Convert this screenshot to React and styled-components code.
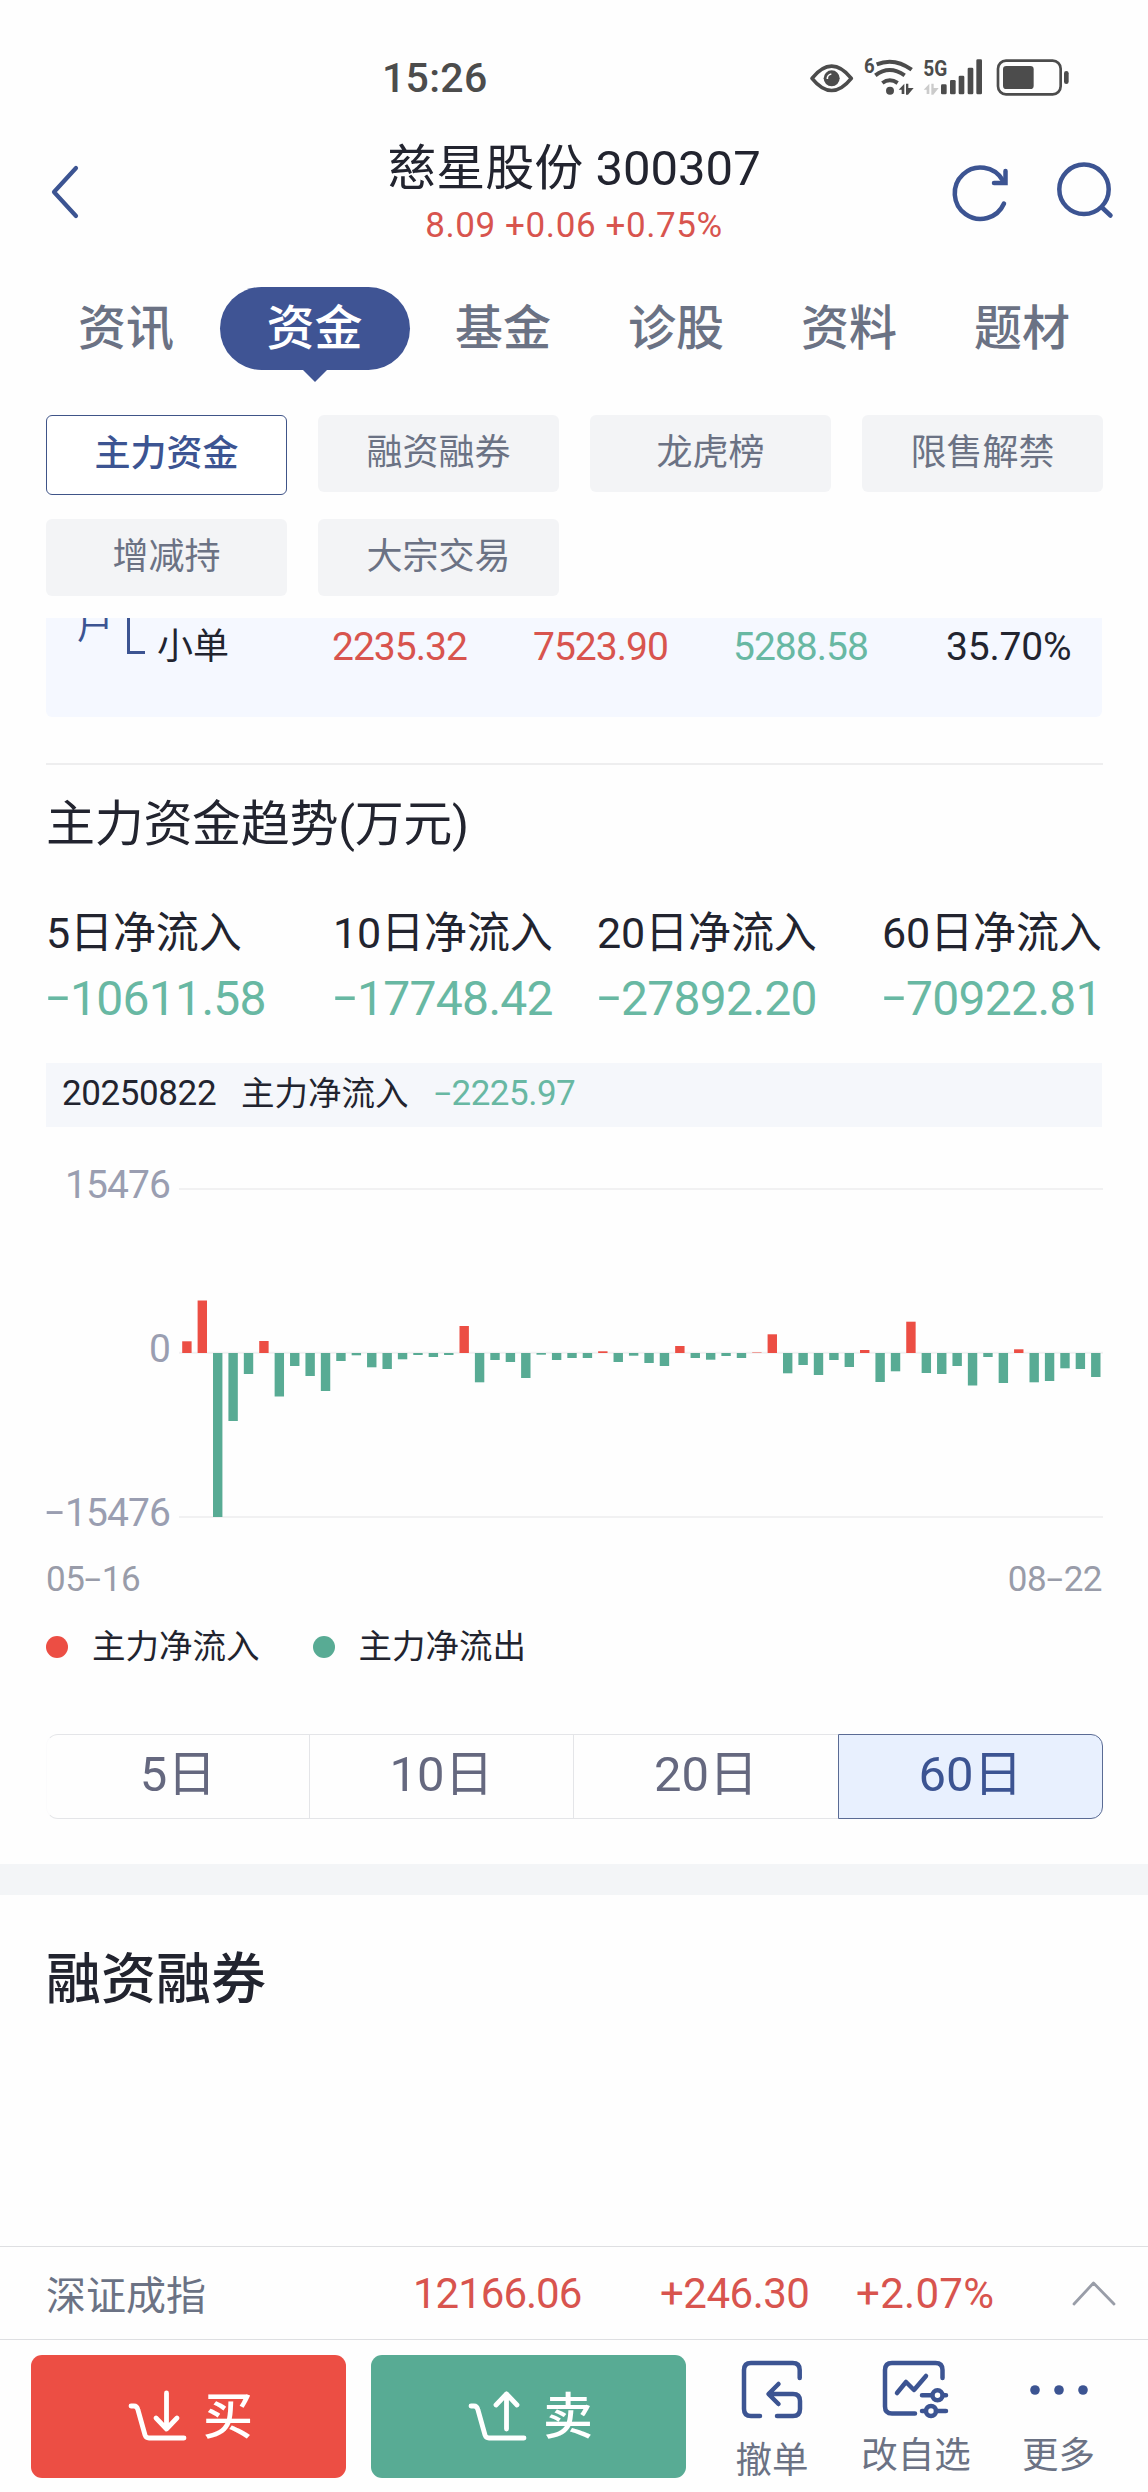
import React from "react";
import styled, { createGlobalStyle } from "styled-components";

const color = {
  brand: "#3c5492",
  ink: "#22242f",
  gray: "#6b7284",
  soft: "#9a9eb1",
  red: "#d8544e",
  green: "#68b8a3",
  fillRed: "#ec4e44",
  fillGreen: "#58ab94",
};

const Global = createGlobalStyle`
  html, body { margin: 0; background: #fefefe; }
  * { box-sizing: border-box; }
  body { font-family: Roboto, "Noto Sans CJK SC", sans-serif; color: ${color.ink}; }
`;

const Page = styled.div`
  display: flex;
  flex-direction: column;
  width: 1148px;
  height: 2492px;
  overflow: hidden;
  white-space: nowrap;
`;

const StatusBar = styled.div`
  display: flex;
  align-items: center;
  justify-content: space-between;
  height: 140px;
  padding: 16px 77px 0 382px;
  color: #4c4c4c;
`;
const Clock = styled.span`
  font-size: 41px;
  font-weight: 500;
  letter-spacing: 0.3px;
  line-height: 50px;
`;

const Header = styled.header`
  display: grid;
  grid-template-columns: 300px 1fr 300px;
  height: 147px;
`;
const BackSlot = styled.div`
  padding: 25px 0 0 49px;
`;
const Titles = styled.div`
  text-align: center;
`;
const Title = styled.div`
  font-size: 49px;
  line-height: 58px;
`;
const Quote = styled.div`
  font-size: 35px;
  line-height: 56px;
  letter-spacing: 0.6px;
  color: ${color.red};
`;
const Actions = styled.div`
  display: flex;
  justify-content: flex-end;
  gap: 46px;
  padding: 20px 32px 0 0;
`;

const Tabs = styled.nav`
  display: flex;
  height: 83px;
  padding-left: 39.5px;
`;
const TabSlot = styled.div`
  display: flex;
  justify-content: center;
  width: ${(p) => (p.$active ? 204 : 173)}px;
`;
const Tab = styled.div`
  position: relative;
  width: ${(p) => (p.$active ? "190px" : "auto")};
  height: 83px;
  border-radius: 42px;
  background: ${(p) => (p.$active ? "#3f5494" : "transparent")};
  color: ${(p) => (p.$active ? "#fff" : color.gray)};
  font-size: 48px;
  font-weight: 500;
  line-height: 83px;
  text-align: center;
`;
const Pointer = styled.i`
  position: absolute;
  left: 82px;
  top: 82px;
  border: 13px solid transparent;
  border-top-color: #3f5494;
  border-bottom: 0;
`;

const Chips = styled.div`
  display: grid;
  grid-template-columns: repeat(4, 241px);
  grid-auto-rows: 77px;
  gap: 27px 31px;
  margin: 45px 0 0 46px;
`;
const Chip = styled.div`
  height: ${(p) => (p.$active ? 80 : 77)}px;
  border-radius: 6px;
  border: ${(p) => (p.$active ? "1.5px solid #3f5488" : "0")};
  background: ${(p) => (p.$active ? "#fff" : "#f3f4f6")};
  color: ${(p) => (p.$active ? color.brand : color.gray)};
  font-size: 36px;
  font-weight: ${(p) => (p.$active ? 500 : 400)};
  line-height: ${(p) => (p.$active ? 76 : 77)}px;
  text-align: center;
`;

const TableTail = styled.div`
  display: grid;
  grid-template-columns: 31px 50px 30px 175px 201px 200px 213px 1fr;
  height: 99px;
  margin: 22px 46px 0;
  overflow: hidden;
  border-radius: 0 0 6px 6px;
  background: #f5f8ff;
  font-size: 39px;
  line-height: 59px;
`;
const Group = styled.span`
  grid-column: 2;
  margin-top: -9px;
  color: ${color.brand};
  font-size: 36px;
  line-height: 36px;
`;
const Bracket = styled.i`
  width: 18px;
  height: 36px;
  border: solid ${color.brand};
  border-width: 0 0 3px 3px;
`;
const OrderName = styled.span`
  font-size: 36px;
`;
const Cell = styled.span`
  color: ${(p) => p.$color || color.ink};
  letter-spacing: ${(p) => p.$ls ?? -1}px;
`;

const Rule = styled.hr`
  width: 1057px;
  height: 2px;
  margin: 46px 0 0 46px;
  border: 0;
  background: #eeeeef;
`;
const Heading = styled.h2`
  margin: 30px 0 0 46px;
  font-size: 49px;
  font-weight: 400;
  letter-spacing: -0.3px;
  line-height: 60px;
`;

const Totals = styled.div`
  display: grid;
  grid-template-columns: 287px 264px 285px auto;
  margin: 48px 0 0 46px;
`;
const TotalLabel = styled.div`
  font-size: 43px;
  letter-spacing: -0.1px;
  line-height: 60px;
`;
const TotalValue = styled.div`
  margin-top: 4px;
  color: ${color.green};
  font-size: 48px;
  letter-spacing: -0.7px;
  line-height: 64px;
`;
const DashMark = styled.span`
  display: inline-block;
  width: 0.5em;
  text-align: center;
  letter-spacing: 0;
  transform: translateY(-0.04em) scaleX(1.7);
`;

const InfoBar = styled.div`
  display: flex;
  height: 64px;
  margin: 32px 46px 0;
  padding-left: 16px;
  background: #f5f7fb;
  font-size: 33.5px;
  line-height: 62px;
`;
const InfoDate = styled.span`
  width: 179px;
  font-size: 35px;
  letter-spacing: -0.4px;
`;
const InfoName = styled.span`
  width: 193px;
`;
const InfoValue = styled(Cell)`
  font-size: 35px;
`;

const Chart = styled.div`
  display: flex;
  height: 368px;
  margin: 38px 0 0 40px;
`;
const Axis = styled.div`
  display: flex;
  flex-direction: column;
  justify-content: space-between;
  width: 130px;
  margin-right: 9px;
  color: ${color.soft};
  font-size: 39px;
  letter-spacing: -0.9px;
  line-height: 40px;
  text-align: right;
`;
const Dates = styled.div`
  display: flex;
  justify-content: space-between;
  margin: 27px 46px 0;
  color: #999ca9;
  font-size: 35px;
  letter-spacing: -0.5px;
  line-height: 40px;
`;
const Legend = styled.div`
  display: flex;
  gap: 53px;
  margin: 27px 0 0 46px;
`;
const LegendItem = styled.div`
  display: flex;
  align-items: center;
  gap: 24px;
  font-size: 33.5px;
  line-height: 40px;

  &::before {
    content: "";
    width: 22px;
    height: 22px;
    border-radius: 50%;
    background: ${(p) => p.$color};
  }
`;

const Segments = styled.div`
  display: grid;
  grid-template-columns: 263px 264px 265px 265px;
  height: 85px;
  margin: 67px 0 0 46px;
`;
const Segment = styled.button`
  padding: 0 0 3px;
  border: solid ${(p) => (p.$active ? "#5a6b94" : "#e4e5e8")};
  border-width: ${(p) => (p.$active ? "1.5px" : "1px 0 1px 1px")};
  border-left-color: ${(p) => (p.$first ? "#fbfbfc" : p.$active ? "#5a6b94" : "#e4e5e8")};
  border-radius: ${(p) => (p.$first ? "12px 0 0 12px" : p.$active ? "0 12px 12px 0" : "0")};
  background: ${(p) => (p.$active ? "#e8f0fe" : "transparent")};
  color: ${(p) => (p.$active ? color.brand : "#65687f")};
  font: 400 49px/78px Roboto, "Noto Sans CJK SC", sans-serif;
`;

const Band = styled.div`
  height: 31px;
  margin-top: 45px;
  background: #f3f5f7;
`;
const NextHeading = styled.h2`
  margin: 53px 0 0 46px;
  font-size: 55px;
  font-weight: 500;
  line-height: 62px;
`;

const Footer = styled.footer`
  margin-top: auto;
`;
const IndexRow = styled.div`
  display: grid;
  grid-template-columns: 367px 247px 196px 216px auto;
  align-items: center;
  height: 94px;
  padding-left: 46px;
  border: solid #dedfe2;
  border-width: 1px 0;
  color: ${color.red};
  font-size: 42px;
`;
const IndexName = styled.span`
  color: ${color.gray};
  font-size: 40px;
`;
const TradeRow = styled.div`
  display: flex;
  height: 152px;
  padding: 15px 0 0 31px;
`;
const TradeButton = styled.button`
  display: flex;
  align-items: center;
  justify-content: center;
  gap: 15px;
  width: 315px;
  height: 123px;
  margin-right: 25px;
  padding: 0 0 0 4px;
  border: 0;
  border-radius: 11px;
  background: ${(p) => p.$color};
  color: #fff;
  font: 500 50px/60px Roboto, "Noto Sans CJK SC", sans-serif;
`;
const Tool = styled.div`
  display: flex;
  flex-direction: column;
  align-items: center;
  width: ${(p) => p.$width}px;
  padding-top: 3px;
  color: ${color.gray};
  font-size: 36.5px;
  line-height: 44px;

  span { margin-top: ${(p) => p.$gap}px; }
`;

const Line = styled.svg`
  display: block;
  flex: none;
  fill: none;
  stroke: ${(p) => p.$color || color.brand};
  stroke-width: ${(p) => p.$w || 4.5};
  stroke-linecap: round;
  stroke-linejoin: round;
`;

const StatusArt = styled.svg`
  overflow: visible;
`;

const Num = ({ children }) =>
  String(children)
    .split(/(-)/)
    .map((part, i) => (part === "-" ? <DashMark key={i}>-</DashMark> : part));

const StatusIcons = () => (
  <StatusArt width="262" height="44" viewBox="88 48 786 132" fill="#4c4c4c">
    <path d="M97 115Q156 42 215 115Q156 188 97 115Z" fill="none" stroke="#4c4c4c" strokeWidth="11" strokeLinejoin="round" />
    <circle cx="156" cy="115" r="24" />
    <path d="M143 117a14 14 0 0 1 12-15" fill="none" stroke="#fff" strokeWidth="5" />
    <text x="253" y="98" fontSize="60" fontWeight="700" textLength="32" lengthAdjust="spacingAndGlyphs">6</text>
    <g fill="none" stroke="#4c4c4c" strokeWidth="12">
      <path d="M291 73q53-22 105 16" />
      <path d="M287 106q42-32 88 0" />
      <path d="M308 129q22-16 46 0" />
    </g>
    <circle cx="331" cy="152" r="12" />
    <path d="M357 149l17-18v31h-8v-13zM379 131h7v13h16l-17 20h-6z" />
    <text x="431" y="107" fontSize="66" fontWeight="700" textLength="72" lengthAdjust="spacingAndGlyphs">5G</text>
    <path fill="#cbcbcb" d="M432 149l17-18v31h-8v-13zM455 131h7v13h15l-16 20h-6z" />
    <g>
      <rect x="484" y="133" width="17" height="30" rx="4" />
      <rect x="511" y="120" width="17" height="43" rx="4" />
      <rect x="537" y="107" width="17" height="56" rx="4" />
      <rect x="564" y="83" width="17" height="80" rx="4" />
      <rect x="590" y="58" width="17" height="105" rx="4" />
    </g>
    <rect x="655" y="62" width="188" height="101" rx="24" fill="none" stroke="#4c4c4c" strokeWidth="8" />
    <rect x="670" y="78" width="92" height="69" rx="10" />
    <rect x="853" y="93" width="14" height="39" rx="7" />
  </StatusArt>
);

const cart = "M3 16h3q3 0 4 4l7 25q1 3 4 3h35";

/* Bar lengths in pixels, positive for inflow and negative for outflow. */
const flows = [
  11.7, 52.5, -164, -68, -21, 12, -43.5, -13, -23, -38, -8, -2.3, -14.3, -16, -6.3, -2, -4, -2, 27, -29.3,
  -7, -9, -25, -1.7, -7, -5, -5, 1.7, -9, -2.7, -10, -13, 7, -5, -6.7, -3, -5, 0.5, 18.7, -20.3,
  -12, -22, -7, -14, 3, -29, -18.3, 31.3, -20, -21, -13, -32.5, -4, -30, 3.7, -29.3, -28, -15.3, -16, -24,
];

const FlowChart = () => (
  <svg width="924" height="368" viewBox="0 0 924 368">
    <path d="M0 24h924M0 187.7h924M0 352h924" stroke="#f1f1f2" strokeWidth="2" />
    {flows.map((v, i) => (
      <rect
        key={i}
        x={3.2 + i * 15.405}
        y={v > 0 ? 188 - v : 188}
        width="9.4"
        height={Math.abs(v)}
        fill={v > 0 ? color.fillRed : color.fillGreen}
      />
    ))}
  </svg>
);

const tabs = ["资讯", "资金", "基金", "诊股", "资料", "题材"];
const chips = ["主力资金", "融资融券", "龙虎榜", "限售解禁", "增减持", "大宗交易"];
const totals = [
  ["5日净流入", "-10611.58"],
  ["10日净流入", "-17748.42"],
  ["20日净流入", "-27892.20"],
  ["60日净流入", "-70922.81"],
];
const ranges = ["5日", "10日", "20日", "60日"];

export default function App() {
  return (
    <>
      <Global />
      <Page>
        <StatusBar>
          <Clock>15:26</Clock>
          <StatusIcons />
        </StatusBar>

        <Header>
          <BackSlot>
            <Line width="32" height="54" $w={4.2}>
              <path d="M27 3L5 27L27 51" />
            </Line>
          </BackSlot>
          <Titles>
            <Title>慈星股份 300307</Title>
            <Quote>8.09 +0.06 +0.75%</Quote>
          </Titles>
          <Actions>
            <Line width="60" height="64" viewBox="0 0 60 64">
              <path d="M54 43.5A25.7 25.7 0 1 1 52.5 20" />
              <path strokeLinejoin="miter" d="M55.5 11v12H44" />
            </Line>
            <Line width="60" height="64" viewBox="0 0 60 64">
              <circle cx="28" cy="29.3" r="24.7" />
              <path d="M46 47.5l8.5 8" />
            </Line>
          </Actions>
        </Header>

        <Tabs>
          {tabs.map((t, i) => (
            <TabSlot key={t} $active={i === 1}>
              <Tab $active={i === 1}>
                {t}
                {i === 1 && <Pointer />}
              </Tab>
            </TabSlot>
          ))}
        </Tabs>

        <Chips>
          {chips.map((c, i) => (
            <Chip key={c} $active={i === 0}>{c}</Chip>
          ))}
        </Chips>

        <TableTail>
          <Group>户</Group>
          <Bracket />
          <OrderName>小单</OrderName>
          <Cell $color={color.red}>2235.32</Cell>
          <Cell $color={color.red}>7523.90</Cell>
          <Cell $color={color.green}>5288.58</Cell>
          <Cell $ls={-0.2}>35.70%</Cell>
        </TableTail>

        <Rule />
        <Heading>主力资金趋势(万元)</Heading>
        <Totals>
          {totals.map(([label, value]) => (
            <div key={label}>
              <TotalLabel>{label}</TotalLabel>
              <TotalValue><Num>{value}</Num></TotalValue>
            </div>
          ))}
        </Totals>

        <InfoBar>
          <InfoDate>20250822</InfoDate>
          <InfoName>主力净流入</InfoName>
          <InfoValue $color={color.green} $ls={-0.5}><Num>-2225.97</Num></InfoValue>
        </InfoBar>

        <Chart>
          <Axis>
            <span>15476</span>
            <span>0</span>
            <span><Num>-15476</Num></span>
          </Axis>
          <FlowChart />
        </Chart>
        <Dates>
          <span><Num>05-16</Num></span>
          <span><Num>08-22</Num></span>
        </Dates>
        <Legend>
          <LegendItem $color={color.fillRed}>主力净流入</LegendItem>
          <LegendItem $color={color.fillGreen}>主力净流出</LegendItem>
        </Legend>

        <Segments>
          {ranges.map((r, i) => (
            <Segment key={r} $first={i === 0} $active={i === 3}>{r}</Segment>
          ))}
        </Segments>

        <Band />
        <NextHeading>融资融券</NextHeading>

        <Footer>
          <IndexRow>
            <IndexName>深证成指</IndexName>
            <Cell $color={color.red}>12166.06</Cell>
            <Cell $color={color.red} $ls={-0.5}>+246.30</Cell>
            <Cell $color={color.red} $ls={0.3}>+2.07%</Cell>
            <Line width="44" height="26" $color="#999da8" $w={2.8}>
              <path d="M2 24L21.5 3L42 24" />
            </Line>
          </IndexRow>
          <TradeRow>
            <TradeButton $color={color.fillRed}>
              <Line width="60" height="54" $color="#fff" $w={4.8}>
                <path d={cart} />
                <path d="M38.5 3v35M28 28l10.5 11L49 28" />
              </Line>
              买
            </TradeButton>
            <TradeButton $color={color.fillGreen}>
              <Line width="60" height="54" $color="#fff" $w={4.8}>
                <path d={cart} />
                <path d="M38.5 39V4M28 15L38.5 4L49 15" />
              </Line>
              卖
            </TradeButton>
            <Tool $width={122} $gap={17}>
              <Line width="64" height="64" viewBox="0 0 64 64">
                <path d="M59.7 20V12q0-7-7-7H11q-7 0-7 7v39q0 7 7 7h9" />
                <path d="M37 58h16q7 0 7-7V43q0-7-7-7H29M38.5 26l-10 10l10 10" />
              </Line>
              <span>撤单</span>
            </Tool>
            <Tool $width={166} $gap={12}>
              <Line width="70" height="64" viewBox="0 0 70 64">
                <path d="M61.5 20V12q0-7-7-7H11q-7 0-7 7v36.5q0 7 7 7h23" />
                <path d="M16 35l9-11l8 8L45 18" />
                <path d="M41 37.3h9M62 37.3h3M41 53h3M55 53h10" />
                <circle cx="56.5" cy="37.3" r="5" />
                <circle cx="50" cy="53" r="5" />
              </Line>
              <span>改自选</span>
            </Tool>
            <Tool $width={119} $gap={12}>
              <svg width="60" height="64" fill={color.brand}>
                <circle cx="6" cy="32" r="4.8" />
                <circle cx="30" cy="32" r="4.8" />
                <circle cx="54" cy="32" r="4.8" />
              </svg>
              <span>更多</span>
            </Tool>
          </TradeRow>
        </Footer>
      </Page>
    </>
  );
}
